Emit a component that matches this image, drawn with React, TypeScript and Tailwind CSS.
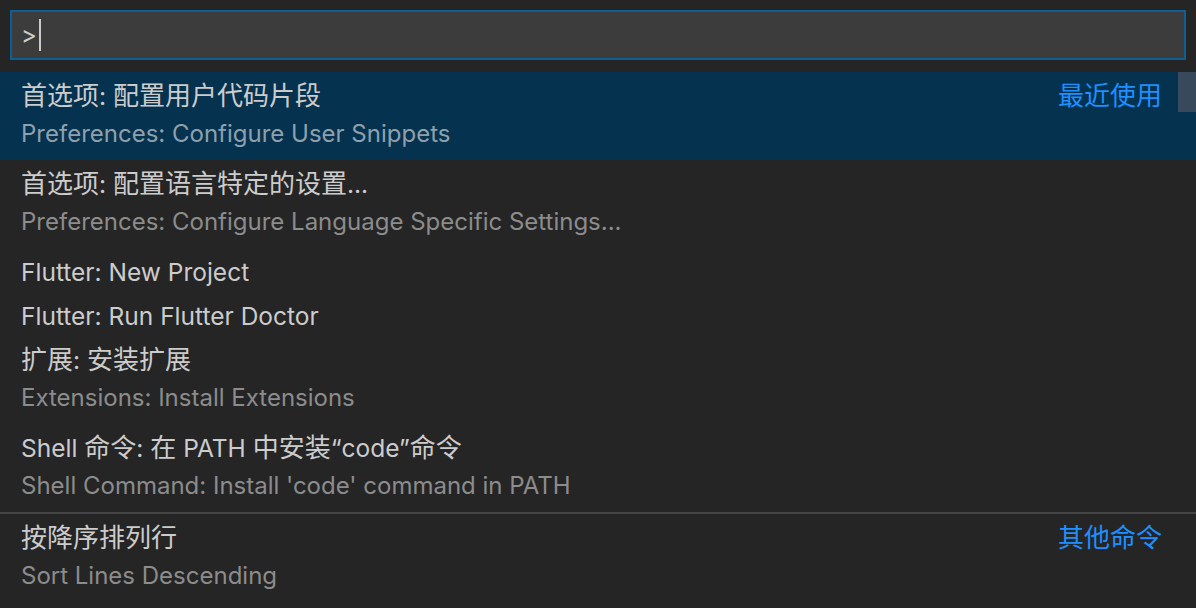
import React from "react";

type Item = {
  label: string;
  detail?: string;
  meta?: string;
  selected?: boolean;
  separator?: boolean;
};

const items: Item[] = [
  {
    label: "首选项: 配置用户代码片段",
    detail: "Preferences: Configure User Snippets",
    meta: "最近使用",
    selected: true,
  },
  {
    label: "首选项: 配置语言特定的设置...",
    detail: "Preferences: Configure Language Specific Settings...",
  },
  { label: "Flutter: New Project" },
  { label: "Flutter: Run Flutter Doctor" },
  { label: "扩展: 安装扩展", detail: "Extensions: Install Extensions" },
  {
    label: "Shell 命令: 在 PATH 中安装“code”命令",
    detail: "Shell Command: Install 'code' command in PATH",
  },
  {
    label: "按降序排列行",
    detail: "Sort Lines Descending",
    meta: "其他命令",
    separator: true,
  },
];

const font = {
  fontFamily: "Inter, 'Noto Sans CJK SC', 'Noto Sans', sans-serif",
};

function Mixed({ text }: { text: string }) {
  const parts = text.split(/([\u4e00-\u9fff]+)/);
  return (
    <>
      {parts.map((p, i) =>
        /[\u4e00-\u9fff]/.test(p) ? (
          <span key={i} className="text-[26px]">
            {p}
          </span>
        ) : (
          <span key={i}>{p}</span>
        )
      )}
    </>
  );
}

function Row({ item }: { item: Item }) {
  return (
    <div
      className={`relative flex w-full ${item.detail ? "h-[88px]" : "h-[44px]"} ${
        item.selected ? "bg-[#04324f]" : ""
      } ${item.separator ? "border-t-2 border-[#454545]" : ""}`}
    >
      <div className="flex min-w-0 flex-1 flex-col pl-[21px] pt-[4px]">
        <div className="h-[40px] truncate text-[24.5px] leading-[40px] text-[#cccccc]">
          <Mixed text={item.label} />
        </div>
        {item.detail && (
          <div
            className={`h-[36px] truncate text-[24px] leading-[36px] ${
              item.selected ? "text-[#8fa0ad]" : "text-[#8c8c8c]"
            }`}
          >
            {item.detail}
          </div>
        )}
      </div>
      {item.meta && (
        <div className="pr-[34px] pt-[4px] text-[26px] leading-[40px] text-[#1f8fff]">
          {item.meta}
        </div>
      )}
    </div>
  );
}

export default function App() {
  return (
    <div className="h-[608px] w-[1196px] overflow-hidden bg-[#252526]" style={font}>
      <div className="px-[10px] pt-[10px] pb-[12px]">
        <div className="flex h-[50px] items-center border-2 border-[#0e5f94] bg-[#3c3c3c] pl-[9px]">
          <span className="text-[24px] leading-none text-[#cccccc]">&gt;</span>
          <span className="ml-[2px] h-[32px] w-[2px] bg-[#cccccc]" />
        </div>
      </div>
      <div className="relative">
        {items.map((it, i) => (
          <Row key={i} item={it} />
        ))}
        <div className="absolute right-0 top-0 h-[40px] w-[18px] bg-[#37495a]" />
      </div>
    </div>
  );
}
